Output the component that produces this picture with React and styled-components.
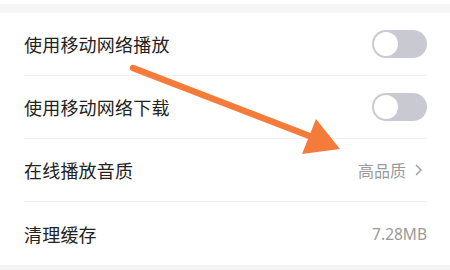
import React from "react";
import styled, { createGlobalStyle } from "styled-components";

const Global = createGlobalStyle`
  html, body { margin: 0; padding: 0; background: #ffffff; }
  body { font-family: "Noto Sans CJK SC", "Noto Sans", sans-serif; }
  #root { width: 450px; height: 270px; overflow: hidden; }
`;

const Page = styled.div`
  position: relative;
  width: 450px;
  height: 270px;
  background: #f5f5f5;
  display: flex;
  flex-direction: column;
  overflow: hidden;
`;

const TopStrip = styled.div`
  height: 4px;
  background: #ffffff;
`;

const Gap = styled.div`
  height: 9px;
  background: #f5f5f5;
`;

const Card = styled.div`
  background: #ffffff;
  display: flex;
  flex-direction: column;
`;

const Row = styled.div`
  height: 63px;
  margin: 0 23px 0 24px;
  display: flex;
  align-items: center;
  justify-content: space-between;
  box-sizing: border-box;
  border-bottom: ${(p) => (p.$last ? "none" : "1px solid #f0f0f0")};
`;

const Label = styled.span`
  font-size: 18px;
  color: #222222;
  letter-spacing: 0.2px;
`;

const Value = styled.span`
  display: flex;
  align-items: center;
  gap: 9px;
  margin-right: ${(p) => (p.$latin ? "0" : "5px")};
  font-size: ${(p) => (p.$latin ? "15.5px" : "16px")};
  color: #9a9a9a;
  font-family: ${(p) => (p.$latin ? '"Noto Sans", "Noto Sans CJK SC", sans-serif' : '"Noto Sans CJK SC", sans-serif')};
`;

const Toggle = styled.div`
  width: 55px;
  height: 28px;
  border-radius: 14px;
  background: #c9cad1;
  display: flex;
  align-items: center;
  padding: 0 2px;
  box-sizing: border-box;
`;

const Knob = styled.div`
  width: 24px;
  height: 24px;
  border-radius: 50%;
  background: #ffffff;
`;

const Overlay = styled.svg`
  position: absolute;
  left: 0;
  top: 0;
  pointer-events: none;
`;

const Chevron = () => (
  <svg width="7" height="12" viewBox="0 0 7 12">
    <polyline points="1,1 6,6 1,11" fill="none" stroke="#9a9a9a" strokeWidth="1.4" />
  </svg>
);

export default function App() {
  return (
    <>
      <Global />
      <Page>
        <TopStrip />
        <Gap />
        <Card>
          <Row>
            <Label>使用移动网络播放</Label>
            <Toggle><Knob /></Toggle>
          </Row>
          <Row>
            <Label>使用移动网络下载</Label>
            <Toggle><Knob /></Toggle>
          </Row>
          <Row>
            <Label>在线播放音质</Label>
            <Value>高品质<Chevron /></Value>
          </Row>
          <Row $last>
            <Label>清理缓存</Label>
            <Value $latin>7.28MB</Value>
          </Row>
        </Card>
        <Overlay width="450" height="270" viewBox="0 0 450 270">
          <line x1="133" y1="68" x2="312" y2="137" stroke="#f57b3b" strokeWidth="6.5" strokeLinecap="round" />
          <polygon points="316,119 340,149 302,154" fill="#f57b3b" />
        </Overlay>
      </Page>
    </>
  );
}
